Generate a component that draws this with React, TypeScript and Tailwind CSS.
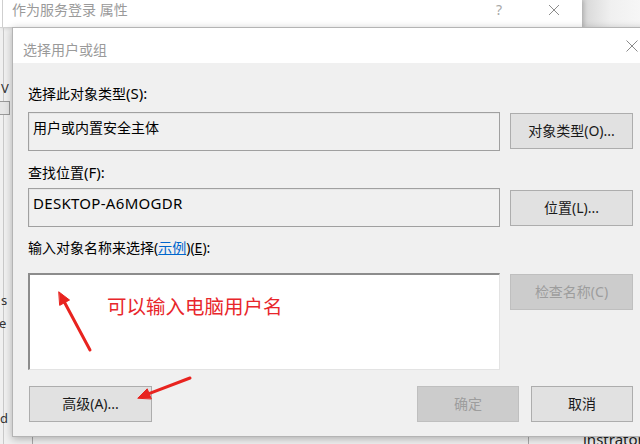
const FONT = "font-['Noto_Sans','Noto_Sans_CJK_SC',sans-serif]";

function WinButton({
  label,
  disabled = false,
  className = "",
}: {
  label: React.ReactNode;
  disabled?: boolean;
  className?: string;
}) {
  return (
    <div
      className={
        "flex h-[36px] items-center justify-center border text-[14px] leading-[20px] " +
        (disabled
          ? "border-[#bfbfbf] bg-[#cccccc] text-[#9d9d9d] "
          : "border-[#adadad] bg-[#e1e1e1] text-[#1a1a1a] ") +
        className
      }
    >
      {label}
    </div>
  );
}

function Arrows() {
  return (
    <svg
      className="pointer-events-none absolute left-0 top-0"
      width={640}
      height={444}
      viewBox="0 0 640 444"
    >
      <g fill="#e8231f" stroke="#e8231f" strokeLinecap="round">
        <line x1={90} y1={350} x2={64.6} y2={302.5} strokeWidth={3} />
        <polygon points="59,292 69.5,300 60,305.2" strokeWidth={1} />
        <line x1={190} y1={378} x2={149} y2={393.7} strokeWidth={3} />
        <polygon points="138,398 147.2,388.8 151.2,398.6" strokeWidth={1} />
      </g>
    </svg>
  );
}

export default function App() {
  return (
    <div
      className={`relative h-[444px] w-[640px] overflow-hidden bg-[#f0f0f0] text-black ${FONT}`}
    >
      {/* window behind */}
      <div className="flex h-[28px]">
        <div className="relative flex h-[28px] w-[582px] border-b border-[#d2d2d2] bg-white shadow-[2px_0_4px_rgba(0,0,0,0.18)]">
          <div className="w-[3px] border-r border-[#cfcfcf]" />
          <span className="pl-[9px] text-[14px] leading-[20px] text-[#9a9a9a]">
            作为服务登录 属性
          </span>
          <span className="absolute left-[496px] top-0 text-[14px] leading-[20px] text-[#a8a8a8]">
            ?
          </span>
          <svg
            className="absolute left-[548px] top-[4px]"
            width={12}
            height={12}
            viewBox="0 0 12 12"
          >
            <path d="M1 1L11 11M11 1L1 11" stroke="#8c8c8c" strokeWidth={1} />
          </svg>
        </div>
        <div className="h-[28px] flex-1 bg-linear-to-r from-[#d6d6d6] via-[#f0f0f0] to-[#f6f6f6]" />
      </div>

      {/* scraps of the window behind, left edge and bottom */}
      <div className="absolute left-[3px] top-[28px] h-[416px] w-px bg-[#c9c9c9]" />
      <span className="absolute left-[1px] top-[80px] text-[13px] leading-[16px] text-[#333]">
        V
      </span>
      <div className="absolute left-[-2px] top-[101px] h-[14px] w-[12px] border border-[#999] bg-[#e6e6e6]" />
      <span className="absolute left-[1px] top-[292px] text-[13px] leading-[16px] text-[#333]">
        s
      </span>
      <span className="absolute left-[-1px] top-[315px] text-[13px] leading-[16px] text-[#333]">
        e
      </span>
      <span className="absolute left-[0px] top-[410px] text-[13px] leading-[16px] text-[#333]">
        d
      </span>
      <div className="absolute left-[32px] top-[430px] h-[14px] w-px bg-[#a8a8a8]" />
      <div className="absolute left-[528px] top-[430px] h-[14px] w-px bg-[#a8a8a8]" />
      <span className="absolute left-[583px] top-[430px] text-[15px] leading-[18px] text-[#222]">
        instrator
      </span>

      {/* front dialog */}
      <div className="absolute left-[12px] top-[27px] w-[640px] border border-[#b4b4b4] bg-[#f0f0f0] shadow-[0_2px_8px_rgba(0,0,0,0.28)]">
        <div className="relative h-[35px] bg-white pl-[10px] pt-[9px]">
          <span className="text-[14px] leading-[20px] text-[#9a9a9a]">
            选择用户或组
          </span>
          <svg
            className="absolute left-[613px] top-[12px]"
            width={12}
            height={12}
            viewBox="0 0 12 12"
          >
            <path d="M0.5 0.5L11.5 11.5M11.5 0.5L0.5 11.5" stroke="#8a8a8a" strokeWidth={1} />
          </svg>
        </div>

        <div className="flex flex-col pb-[14px] pl-[15px] pt-[20px] text-[14px] leading-[20px]">
          <div className="h-[20px]">
            选择此对象类型<span className="text-[15px] leading-[20px]">(S):</span>
          </div>
          <div className="mt-[9px] flex items-start gap-[10px]">
            <div className="h-[39px] w-[472px] border border-[#a0a0a0] pl-[4px] pt-[5px] shadow-[inset_1px_1px_0_#e6e6e6]">
              用户或内置安全主体
            </div>
            <WinButton label="对象类型(O)..." className="mt-[1px] w-[123px]" />
          </div>

          <div className="mt-[11px] h-[20px]">
            查找位置<span className="text-[15px] leading-[20px]">(F):</span>
          </div>
          <div className="mt-[6px] flex items-start gap-[10px]">
            <div className="h-[39px] w-[472px] border border-[#a0a0a0] pl-[4px] pt-[4px] text-[15px] tracking-[0.3px] shadow-[inset_1px_1px_0_#e6e6e6]">
              DESKTOP-A6MOGDR
            </div>
            <WinButton label="位置(L)..." className="mt-[2px] w-[123px]" />
          </div>

          <div className="mt-[11px] h-[20px]">
            输入对象名称来选择(
            <span className="text-[#0066cc] underline">示例</span>)(
            <span className="underline">E</span>):
          </div>
          <div className="mt-[15px] flex items-start gap-[10px]">
            <div className="h-[97px] w-[472px] border-b border-l-2 border-r border-t-2 border-b-[#e3e3e3] border-l-[#8c8c8c] border-r-[#e3e3e3] border-t-[#8c8c8c] bg-white pl-[77px] pt-[20px]">
              <span className="text-[19.5px] leading-[24px] text-[#e8262b]">
                可以输入电脑用户名
              </span>
            </div>
            <WinButton label="检查名称(C)" disabled className="mt-[1px] w-[123px]" />
          </div>

          <div className="mt-[16px] flex items-center">
            <WinButton label="高级(A)..." className="ml-px w-[123px]" />
            <div className="ml-[265px] flex gap-[12px]">
              <WinButton label="确定" disabled className="w-[102px]" />
              <WinButton label="取消" className="w-[102px]" />
            </div>
          </div>
        </div>
      </div>

      <Arrows />
    </div>
  );
}
